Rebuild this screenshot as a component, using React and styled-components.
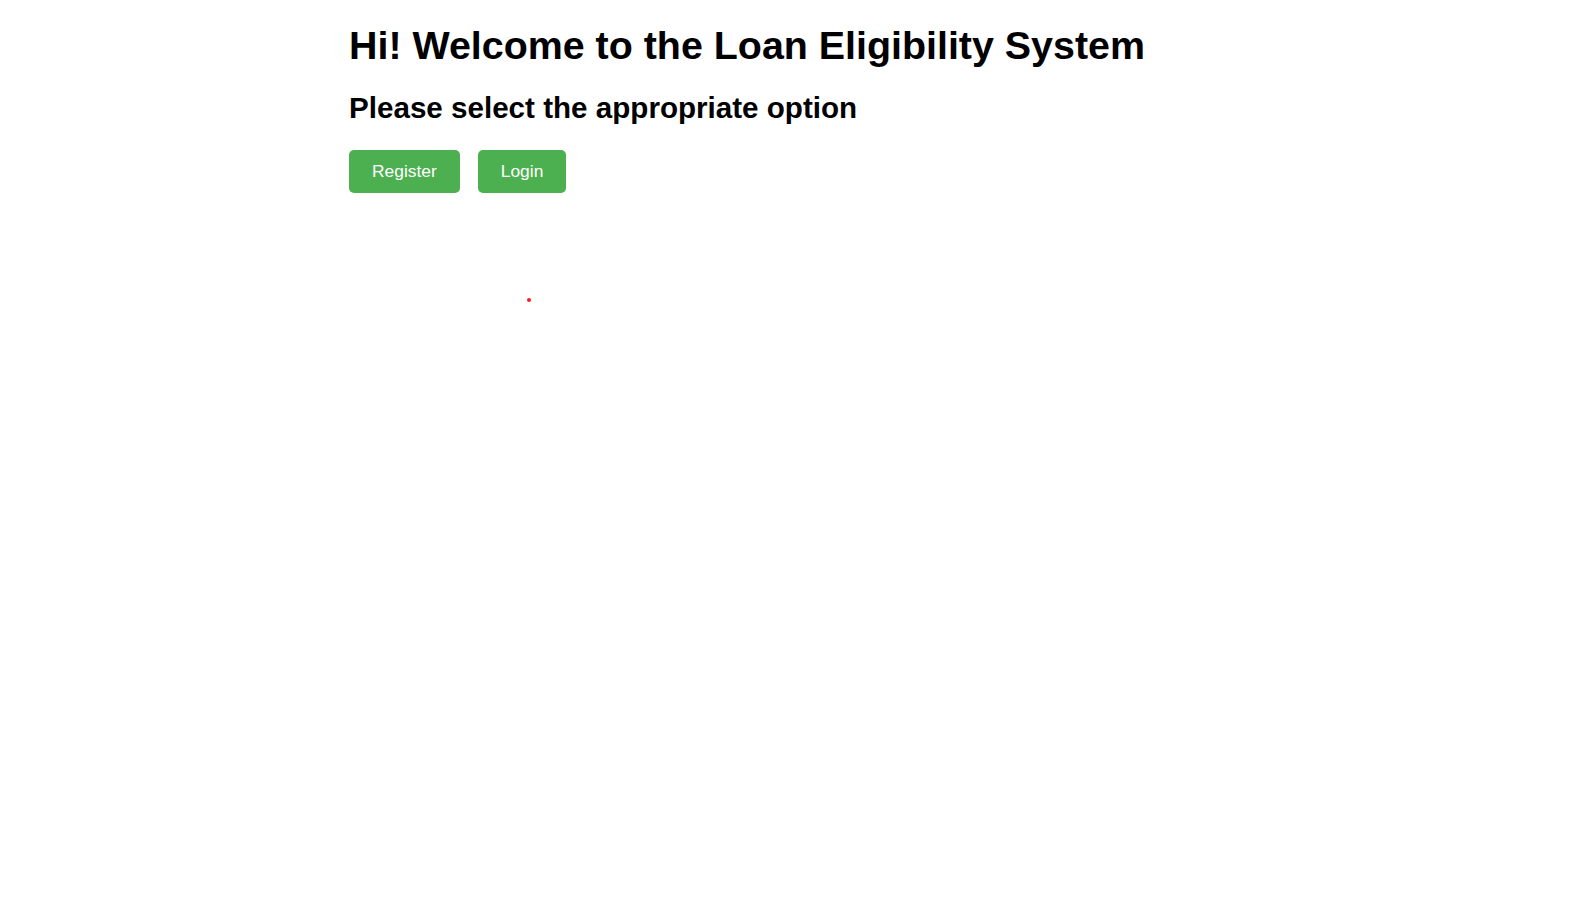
import styled, { createGlobalStyle } from "styled-components";

const GlobalStyle = createGlobalStyle`
    html, body {
        margin: 0;
        padding: 0;
        background: #ffffff;
        font-family: "Liberation Sans", Arial, sans-serif;
    }
`;

const StyledPage = styled.div`
    max-width: 891px;
    margin: 0 auto;
    padding-top: 22px;

    display: flex;
    flex-direction: column;
`;

const StyledTitle = styled.h1`
    margin: 0;
    font-size: 39.4px;
    font-weight: 700;
    line-height: 46px;
    color: #000000;
`;

const StyledSubtitle = styled.h2`
    margin: 23px 0 0;
    font-size: 29.6px;
    font-weight: 700;
    line-height: 34px;
    color: #000000;
`;

const StyledButtonRow = styled.div`
    margin-top: 25px;
    display: flex;
    column-gap: 18px;
`;

const StyledButton = styled.button`
    height: 43px;
    padding: 0 23px;
    border: 0;
    border-radius: 5px;

    background: #4caf50;
    color: #ffffff;
    font-family: "Liberation Sans", Arial, sans-serif;
    font-size: 17.4px;
    cursor: pointer;
`;

const StyledErrorDot = styled.span`
    display: block;
    width: 4px;
    height: 4px;
    margin: 105px 0 0 178px;
    border-radius: 50%;
    background: #ff1a1a;
`;

export default function App() {
    return (
        <>
            <GlobalStyle />
            <StyledPage>
                <StyledTitle>Hi! Welcome to the Loan Eligibility System</StyledTitle>
                <StyledSubtitle>Please select the appropriate option</StyledSubtitle>
                <StyledButtonRow>
                    <StyledButton>Register</StyledButton>
                    <StyledButton>Login</StyledButton>
                </StyledButtonRow>
                <StyledErrorDot />
            </StyledPage>
        </>
    );
}
